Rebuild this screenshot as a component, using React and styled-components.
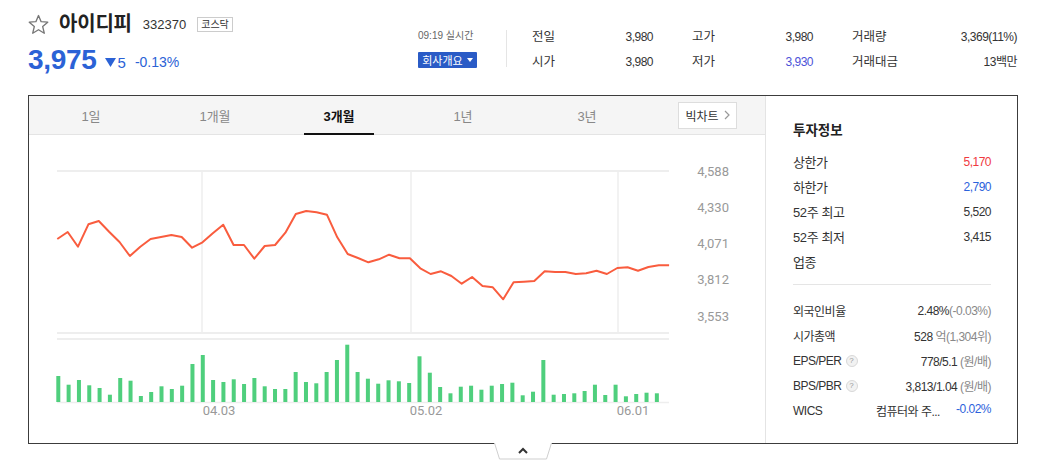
import styled, { createGlobalStyle } from "styled-components";

// 종목 요약 + 3개월 차트 카드

const GlobalStyle = createGlobalStyle`
  body {
    margin: 0;
    background: #fff;
    font-family: "Liberation Sans", "Noto Sans CJK KR", sans-serif;
    color: #333;
  }
`;

const stats = [
  [
    { label: "전일", value: "3,980" },
    { label: "고가", value: "3,980" },
    { label: "거래량", value: "3,369(11%)" },
  ],
  [
    { label: "시가", value: "3,980" },
    { label: "저가", value: "3,930", color: "#4b52d8" },
    { label: "거래대금", value: "13백만" },
  ],
];

const tabs = ["1일", "1개월", "3개월", "1년", "3년"];

// 차트 픽셀 좌표 (svg 기준)
const closeY = [
  104, 97, 111.7, 89.3, 86, 96.7, 107, 121, 111.7, 104, 102, 100, 102, 112.7,
  107.3, 98.3, 89.7, 110, 110, 123.7, 111, 110, 97.7, 79, 76, 77.3, 79.7, 102.3,
  119, 123, 127.3, 124.3, 119.7, 123.3, 123.3, 133.3, 139, 136.3, 141, 148.7,
  142, 151, 152.3, 164.3, 147.3, 146.7, 146, 136.3, 137, 137, 139, 138.3, 135.7,
  139, 133, 132.3, 135.7, 132, 130.3, 130.3,
];

const volumeH = [
  26, 17.3, 22, 16.7, 14, 7.3, 24, 21.3, 6, 10, 15.7, 13, 16.3, 38, 47, 22, 20,
  22.7, 18, 24, 15.7, 13, 13, 30, 20, 18.7, 30, 42, 57.3, 30, 23.3, 18.3, 21.7,
  20.7, 19, 45.7, 29.3, 15, 8.7, 15.3, 16.3, 12.3, 16.3, 18, 19.3, 6.7, 10.3,
  42, 7.3, 8, 8.7, 11, 17.3, 7, 17.3, 5.7, 8, 9.3, 8.7,
];

const yLabels = [
  { v: "4,588", y: 37.5 },
  { v: "4,330", y: 73.5 },
  { v: "4,071", y: 109.5 },
  { v: "3,812", y: 145.5 },
  { v: "3,553", y: 182.5 },
];

const dates = [
  { v: "04.03", x: 190 },
  { v: "05.02", x: 397 },
  { v: "06.01", x: 604 },
];

const investTop = [
  { label: "상한가", value: "5,170", color: "#f0393e" },
  { label: "하한가", value: "2,790", color: "#2c62dc" },
  { label: "52주 최고", value: "5,520" },
  { label: "52주 최저", value: "3,415" },
  { label: "업종", value: "" },
];

export default function App() {
  return (
    <Page>
      <GlobalStyle />
      <Header>
        <Summary>
          <TitleRow>
            <StarIcon />
            <Title>아이디피</Title>
            <Code>332370</Code>
            <MarketBadge>코스닥</MarketBadge>
          </TitleRow>
          <PriceRow>
            <Price>3,975</Price>
            <Change>
              <svg width="11" height="9" viewBox="0 0 11 9">
                <polygon points="0,0 11,0 5.5,9" fill="#2b62d6" />
              </svg>
              <span>5</span>
            </Change>
            <Rate>-0.13%</Rate>
          </PriceRow>
        </Summary>

        <TimeBlock>
          <Time>09:19 실시간</Time>
          <CompanyBtn>
            회사개요
            <svg width="6" height="4" viewBox="0 0 6 4">
              <polygon points="0,0 6,0 3,4" fill="#fff" />
            </svg>
          </CompanyBtn>
        </TimeBlock>

        <VDivider />

        <StatsGrid>
          {stats.flat().map((s) => (
            <StatItem key={s.label}>
              <StatLabel>{s.label}</StatLabel>
              <StatValue $color={s.color}>{s.value}</StatValue>
            </StatItem>
          ))}
        </StatsGrid>
      </Header>

      <Panel>
        <ChartSection>
          <TabBar>
            {tabs.map((t) => (
              <Tab key={t} $active={t === "3개월"}>
                {t}
              </Tab>
            ))}
            <BigChartBtn>
              빅차트
              <svg width="6" height="10" viewBox="0 0 6 10">
                <polyline
                  points="1,1 5,5 1,9"
                  fill="none"
                  stroke="#999"
                  strokeWidth="1.2"
                />
              </svg>
            </BigChartBtn>
          </TabBar>
          <PriceChart />
        </ChartSection>

        <Sidebar>
          <SideTitle>투자정보</SideTitle>
          {investTop.map((r) => (
            <InfoRow key={r.label}>
              <span>{r.label}</span>
              <InfoValue $color={r.color}>{r.value}</InfoValue>
            </InfoRow>
          ))}
          <SideDivider />
          <SmallRow>
            <span>외국인비율</span>
            <InfoValue>
              2.48%<Muted>(-0.03%)</Muted>
            </InfoValue>
          </SmallRow>
          <SmallRow>
            <span>시가총액</span>
            <InfoValue>
              528 <Muted>억(1,304위)</Muted>
            </InfoValue>
          </SmallRow>
          <SmallRow>
            <LabelWithHelp>
              EPS/PER <Help>?</Help>
            </LabelWithHelp>
            <InfoValue>
              778/5.1 <Muted>(원/배)</Muted>
            </InfoValue>
          </SmallRow>
          <SmallRow>
            <LabelWithHelp>
              BPS/PBR <Help>?</Help>
            </LabelWithHelp>
            <InfoValue>
              3,813/1.04 <Muted>(원/배)</Muted>
            </InfoValue>
          </SmallRow>
          <SmallRow>
            <span>WICS</span>
            <Wics>
              <span>컴퓨터와 주...</span>
              <InfoValue $color="#2c62dc">-0.02%</InfoValue>
            </Wics>
          </SmallRow>
        </Sidebar>
      </Panel>

      <CollapseRow>
        <CollapseTab>
          <svg width="58" height="17" viewBox="0 0 58 17">
            <polyline
              points="0.5,0 5.5,16 52.5,16 57.5,0"
              fill="#fff"
              stroke="#cfcfcf"
              strokeWidth="1"
            />
            <polyline
              points="25,10 29,6 33,10"
              fill="none"
              stroke="#333"
              strokeWidth="2"
            />
          </svg>
        </CollapseTab>
      </CollapseRow>
    </Page>
  );
}

const StarIcon = () => (
  <svg width="21" height="21" viewBox="0 0 20 20">
    <polygon
      points="10,1.5 12.5,7.3 18.8,7.8 14,12 15.5,18.3 10,15 4.5,18.3 6,12 1.2,7.8 7.5,7.3"
      fill="none"
      stroke="#777"
      strokeWidth="1.3"
      strokeLinejoin="round"
    />
  </svg>
);

const PriceChart = () => {
  const step = 10.37;
  const x0 = 28.3;
  const pts = closeY.map((y, i) => `${(x0 + i * step).toFixed(1)},${y}`).join(" ");
  return (
    <ChartSvg width="736" height="308" viewBox="0 0 736 308">
      {/* 그리드 */}
      <line x1="28" y1="36" x2="640" y2="36" stroke="#eee" strokeWidth="2" />
      <line x1="28" y1="198" x2="640" y2="198" stroke="#eee" strokeWidth="2" />
      {[173, 382, 589].map((x) => (
        <line key={x} x1={x} y1="36" x2={x} y2="198" stroke="#eee" strokeWidth="1.5" />
      ))}
      <line x1="28" y1="204" x2="640" y2="204" stroke="#eee" strokeWidth="2" />
      <line x1="28" y1="267.5" x2="640" y2="267.5" stroke="#eee" strokeWidth="1.5" />

      <polyline
        points={pts}
        fill="none"
        stroke="#f95c3e"
        strokeWidth="2"
        strokeLinejoin="round"
      />

      {volumeH.map((h, i) => (
        <rect
          key={i}
          x={29.3 + i * 10.32 - 2}
          y={267 - h}
          width="4"
          height={h}
          fill="#4fcf7d"
        />
      ))}

      {yLabels.map((l) => (
        <AxisText key={l.v} x="700" y={l.y} textAnchor="end" dominantBaseline="middle">
          {l.v}
        </AxisText>
      ))}
      {dates.map((d) => (
        <AxisText key={d.v} x={d.x} y="277" textAnchor="middle" dominantBaseline="middle">
          {d.v}
        </AxisText>
      ))}
    </ChartSvg>
  );
};

//todo ---- layout

const Page = styled.div`
  width: 1042px;
  height: 469px;
  overflow: hidden;
`;

const Header = styled.header`
  display: flex;
  height: 95px;
  padding: 0 24px 0 28px;
  box-sizing: border-box;
`;

const Summary = styled.div`
  width: 390px;
  padding-top: 12px;
  display: flex;
  flex-direction: column;
`;

const TitleRow = styled.div`
  display: flex;
  align-items: center;
  height: 24px;
`;

const Title = styled.h1`
  margin: 0 0 0 10px;
  font-size: 20px;
  font-weight: 700;
  color: #222;
  letter-spacing: -0.2px;
  line-height: 24px;
`;

const Code = styled.span`
  margin-left: 11px;
  font-size: 13px;
  color: #333;
`;

const MarketBadge = styled.span`
  margin-left: 11px;
  border: 1px solid #ccc;
  padding: 0 3px;
  font-size: 10px;
  line-height: 13px;
  color: #333;
`;

const PriceRow = styled.div`
  display: flex;
  align-items: center;
  margin-top: 9px;
  height: 30px;
`;

const Price = styled.strong`
  font-size: 28px;
  font-weight: 700;
  color: #2b62d6;
  letter-spacing: -0.3px;
`;

const Change = styled.span`
  display: flex;
  align-items: center;
  gap: 2px;
  margin-left: 8px;
  margin-top: 4px;
  font-size: 15px;
  color: #2b62d6;
`;

const Rate = styled.span`
  margin-left: 9px;
  margin-top: 4px;
  font-size: 14px;
  color: #2b62d6;
`;

const TimeBlock = styled.div`
  width: 60px;
  padding-top: 29px;
  display: flex;
  flex-direction: column;
`;

const Time = styled.span`
  font-size: 10px;
  line-height: 14px;
  color: #666;
  white-space: nowrap;
`;

const CompanyBtn = styled.button`
  margin-top: 9px;
  width: 59px;
  height: 16px;
  padding: 0;
  border: none;
  border-radius: 1px;
  background: #2a5bc6;
  color: #fff;
  font-family: inherit;
  font-size: 11px;
  display: flex;
  align-items: center;
  justify-content: center;
  gap: 4px;
`;

const VDivider = styled.div`
  width: 1px;
  height: 37px;
  margin: 30px 0 0 28px;
  background: #e5e5e5;
`;

const StatsGrid = styled.div`
  margin-left: 25px;
  padding-top: 27px;
  display: grid;
  grid-template-columns: 121px 121px 165px;
  column-gap: 39px;
  row-gap: 5px;
  align-content: start;
`;

const StatItem = styled.div`
  display: flex;
  justify-content: space-between;
  align-items: center;
  line-height: 20px;
`;

const StatLabel = styled.span`
  font-size: 12.5px;
  color: #333;
`;

const StatValue = styled.span`
  font-size: 12px;
  letter-spacing: -0.5px;
  color: ${(p) => p.$color || "#333"};
`;

//todo ---- panel

const Panel = styled.section`
  margin-left: 28px;
  width: 990px;
  height: 349px;
  border: 1px solid #3c3c3c;
  box-sizing: border-box;
  display: flex;
`;

const ChartSection = styled.div`
  width: 736px;
  display: flex;
  flex-direction: column;
`;

const TabBar = styled.div`
  display: flex;
  height: 39px;
  box-sizing: border-box;
  background: #f5f5f5;
  border-bottom: 1px solid #e4e4e4;
  padding-right: 28px;
`;

const Tab = styled.div`
  position: relative;
  width: 124px;
  display: flex;
  align-items: center;
  justify-content: center;
  font-size: 13px;
  color: ${(p) => (p.$active ? "#111" : "#888")};
  font-weight: ${(p) => (p.$active ? 700 : 400)};

  &::after {
    content: "";
    display: ${(p) => (p.$active ? "block" : "none")};
    position: absolute;
    left: 27px;
    right: 27px;
    bottom: -1px;
    height: 2px;
    background: #111;
  }
`;

const BigChartBtn = styled.button`
  margin-left: auto;
  align-self: center;
  width: 59px;
  height: 27px;
  padding: 0;
  background: #fff;
  border: 1px solid #ddd;
  font-family: inherit;
  font-size: 12px;
  color: #333;
  display: flex;
  align-items: center;
  justify-content: center;
  gap: 5px;
`;

const ChartSvg = styled.svg`
  display: block;
`;

const AxisText = styled.text`
  font-family: "Roboto", "Liberation Sans", sans-serif;
  font-size: 13px;
  fill: #999;
`;

//todo ---- sidebar

const Sidebar = styled.aside`
  flex: 1;
  border-left: 1px solid #e4e4e4;
  padding: 25px 26px 0 27px;
  box-sizing: border-box;
`;

const SideTitle = styled.h2`
  margin: 0 0 8px;
  font-size: 13.5px;
  font-weight: 700;
  line-height: 20px;
  color: #222;
`;

const InfoRow = styled.div`
  display: flex;
  justify-content: space-between;
  align-items: center;
  height: 25px;
  font-size: 13px;
  letter-spacing: -0.4px;
  color: #333;
`;

const SmallRow = styled(InfoRow)`
  font-size: 12px;
  letter-spacing: -0.5px;
`;

const InfoValue = styled.span`
  font-size: 12px;
  letter-spacing: -0.5px;
  color: ${(p) => p.$color || "#333"};
`;

const Muted = styled.span`
  color: #888;
`;

const SideDivider = styled.div`
  height: 1px;
  background: #e5e5e5;
  margin: 10px 0 13px;
`;

const LabelWithHelp = styled.span`
  display: flex;
  align-items: center;
  gap: 4px;
`;

const Help = styled.span`
  width: 10px;
  height: 10px;
  border: 1px solid #d8d8d8;
  border-radius: 50%;
  background: #f2f2f2;
  color: #999;
  font-size: 8px;
  line-height: 10px;
  text-align: center;
  letter-spacing: 0;
`;

const Wics = styled.span`
  display: flex;
  gap: 16px;
`;

const CollapseRow = styled.div`
  margin-left: 28px;
  width: 990px;
  margin-top: -1px;
  display: flex;
  justify-content: center;
`;

const CollapseTab = styled.button`
  padding: 0;
  border: none;
  background: none;
  display: block;
  line-height: 0;
`;
